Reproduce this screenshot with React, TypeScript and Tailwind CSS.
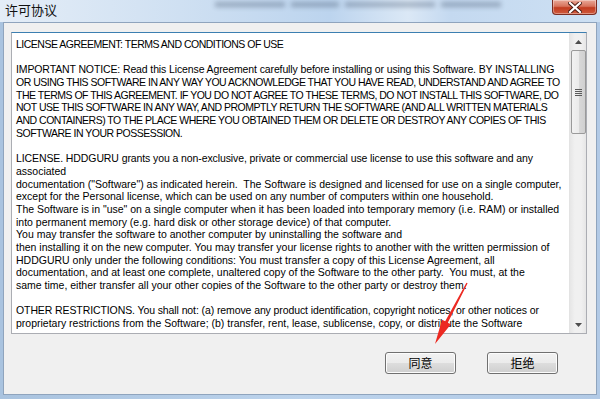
import React from 'react';

// t: letter-spacing in px, caps-heavy lines need to be tighter
const lines: { text: string; t?: number }[] = [
  { text: 'LICENSE AGREEMENT: TERMS AND CONDITIONS OF USE', t: -0.5 },
  { text: '' },
  { text: 'IMPORTANT NOTICE: Read this License Agreement carefully before installing or using this Software. BY INSTALLING', t: -0.12 },
  { text: 'OR USING THIS SOFTWARE IN ANY WAY YOU ACKNOWLEDGE THAT YOU HAVE READ, UNDERSTAND AND AGREE TO', t: -0.5 },
  { text: 'THE TERMS OF THIS AGREEMENT. IF YOU DO NOT AGREE TO THESE TERMS, DO NOT INSTALL THIS SOFTWARE, DO', t: -0.5 },
  { text: 'NOT USE THIS SOFTWARE IN ANY WAY, AND PROMPTLY RETURN THE SOFTWARE (AND ALL WRITTEN MATERIALS', t: -0.5 },
  { text: 'AND CONTAINERS) TO THE PLACE WHERE YOU OBTAINED THEM OR DELETE OR DESTROY ANY COPIES OF THIS', t: -0.5 },
  { text: 'SOFTWARE IN YOUR POSSESSION.', t: -0.5 },
  { text: '' },
  { text: 'LICENSE. HDDGURU grants you a non-exclusive, private or commercial use license to use this software and any', t: -0.1 },
  { text: 'associated' },
  { text: 'documentation ("Software") as indicated herein.  The Software is designed and licensed for use on a single computer,' },
  { text: 'except for the Personal license, which can be used on any number of computers within one household.' },
  { text: 'The Software is in "use" on a single computer when it has been loaded into temporary memory (i.e. RAM) or installed' },
  { text: 'into permanent memory (e.g. hard disk or other storage device) of that computer.' },
  { text: 'You may transfer the software to another computer by uninstalling the software and' },
  { text: 'then installing it on the new computer. You may transfer your license rights to another with the written permission of' },
  { text: 'HDDGURU only under the following conditions: You must transfer a copy of this License Agreement, all' },
  { text: 'documentation, and at least one complete, unaltered copy of the Software to the other party.  You must, at the' },
  { text: 'same time, either transfer all your other copies of the Software to the other party or destroy them.' },
  { text: '' },
  { text: 'OTHER RESTRICTIONS. You shall not: (a) remove any product identification, copyright notices, or other notices or', t: -0.1 },
  { text: 'proprietary restrictions from the Software; (b) transfer, rent, lease, sublicense, copy, or distribute the Software' },
];

const WinButton = ({ label }: { label: string }) => (
  <button className="w-[71px] h-[22px] rounded-[3px] border border-[#707070] bg-[linear-gradient(to_bottom,#f2f2f2_0%,#ebebeb_50%,#dddddd_51%,#cfcfcf_100%)] shadow-[inset_0_0_0_1px_#fcfcfc] text-[12px] text-black leading-none font-['Noto_Sans_CJK_SC',sans-serif]">
    {label}
  </button>
);

const Scrollbar = () => (
  <div className="w-[17px] h-full bg-[linear-gradient(to_right,#e6e6e6,#f0f0f0_30%,#f0f0f0_70%,#e6e6e6)] border-l border-[#e3e3e3] flex flex-col items-center">
    <div className="h-[17px] w-full flex items-center justify-center">
      <svg width="7" height="4" viewBox="0 0 7 4">
        <path d="M0 4 L3.5 0 L7 4 Z" fill="#4d4d4d" />
      </svg>
    </div>
    <div className="w-[15px] h-[84px] rounded-[2px] border border-[#9a9a9a] bg-[linear-gradient(to_right,#f2f2f2,#ebebeb_50%,#d9d9d9_51%,#d0d0d0)] flex flex-col items-center justify-center gap-[1px]">
      <div className="w-[7px] h-[1px] bg-[#5a5a5a]" />
      <div className="w-[7px] h-[1px] bg-[#5a5a5a]" />
      <div className="w-[7px] h-[1px] bg-[#5a5a5a]" />
      <div className="w-[7px] h-[1px] bg-[#5a5a5a]" />
    </div>
    <div className="flex-1" />
    <div className="h-[17px] w-full flex items-center justify-center">
      <svg width="7" height="4" viewBox="0 0 7 4">
        <path d="M0 0 L7 0 L3.5 4 Z" fill="#4d4d4d" />
      </svg>
    </div>
  </div>
);

export default function App() {
  return (
    <div className="relative w-[600px] h-[399px] overflow-hidden flex flex-col bg-[linear-gradient(to_right,#a9c3df,#bcd3ec_50%,#b2cae6)]">
      {/* title bar, glass shows a smudge of the window behind */}
      <div className="relative h-[22px] shrink-0 overflow-hidden bg-[linear-gradient(to_right,#e4edf7,#cfe0f2_30%,#bcd4ee_55%,#dbe8f6_68%,#c4d9f0_75%,#cde0f3)]">
        <div className="absolute left-[215px] top-[2px] flex gap-[6px] opacity-30 blur-[2.5px]">
          <div className="w-[70px] h-[5px] bg-[#1c2c44]" />
          <div className="w-[48px] h-[5px] bg-[#1c2c44]" />
          <div className="w-[90px] h-[5px] bg-[#1c2c44]" />
          <div className="w-[60px] h-[5px] bg-[#1c2c44]" />
        </div>
        <span className="absolute left-[5px] top-[2px] text-[13px] leading-[16px] text-[#111] font-['Noto_Sans_CJK_SC',sans-serif]">
          许可协议
        </span>
        <div className="absolute right-[3px] top-0 w-[45px] h-[15px] rounded-b-[4px] border border-t-0 border-[#7b2d22] bg-[linear-gradient(to_bottom,#e9a998,#d7735c_45%,#c23c20_55%,#cf5a3c)] shadow-[inset_0_0_0_1px_rgba(255,255,255,0.35)] flex items-center justify-center">
          <svg width="14" height="11" viewBox="0 0 14 11">
            <path d="M2 1 L12 10 M12 1 L2 10" stroke="#4a1a12" strokeWidth="4" strokeLinecap="square" />
            <path d="M2 1 L12 10 M12 1 L2 10" stroke="#ffffff" strokeWidth="2.2" strokeLinecap="square" />
          </svg>
        </div>
      </div>

      {/* client area */}
      <div className="flex-1 mx-[3px] mb-[4px] border border-[#8fa4bd] bg-[#f0f0f0] flex flex-col">
        <div className="mt-[9px] ml-[7px] mr-[9px] h-[302px] border border-[#abadb3] border-t-[#3c7fb1] bg-white flex">
          <div className="flex-1 pl-[4px] pt-[5px] overflow-hidden font-['Liberation_Sans',sans-serif] text-[10.5px] leading-[12.7px] text-black">
            {lines.map((line, i) => (
              <div key={i} className="whitespace-pre h-[12.7px]" style={line.t ? { letterSpacing: `${line.t}px` } : undefined}>
                {line.text}
              </div>
            ))}
          </div>
          <Scrollbar />
        </div>
        <div className="flex justify-end gap-[31px] mt-[18px] mr-[38px]">
          <WinButton label="同意" />
          <WinButton label="拒绝" />
        </div>
      </div>

      {/* red arrow annotation */}
      <svg className="absolute inset-0 pointer-events-none" width="600" height="399" viewBox="0 0 600 399">
        <polygon
          points="466.4,282.7 467.6,283.3 447.8,322.7 450.9,324.3 435,344 442,319.7 445.2,321.3"
          fill="#ec2a22"
        />
      </svg>
    </div>
  );
}
